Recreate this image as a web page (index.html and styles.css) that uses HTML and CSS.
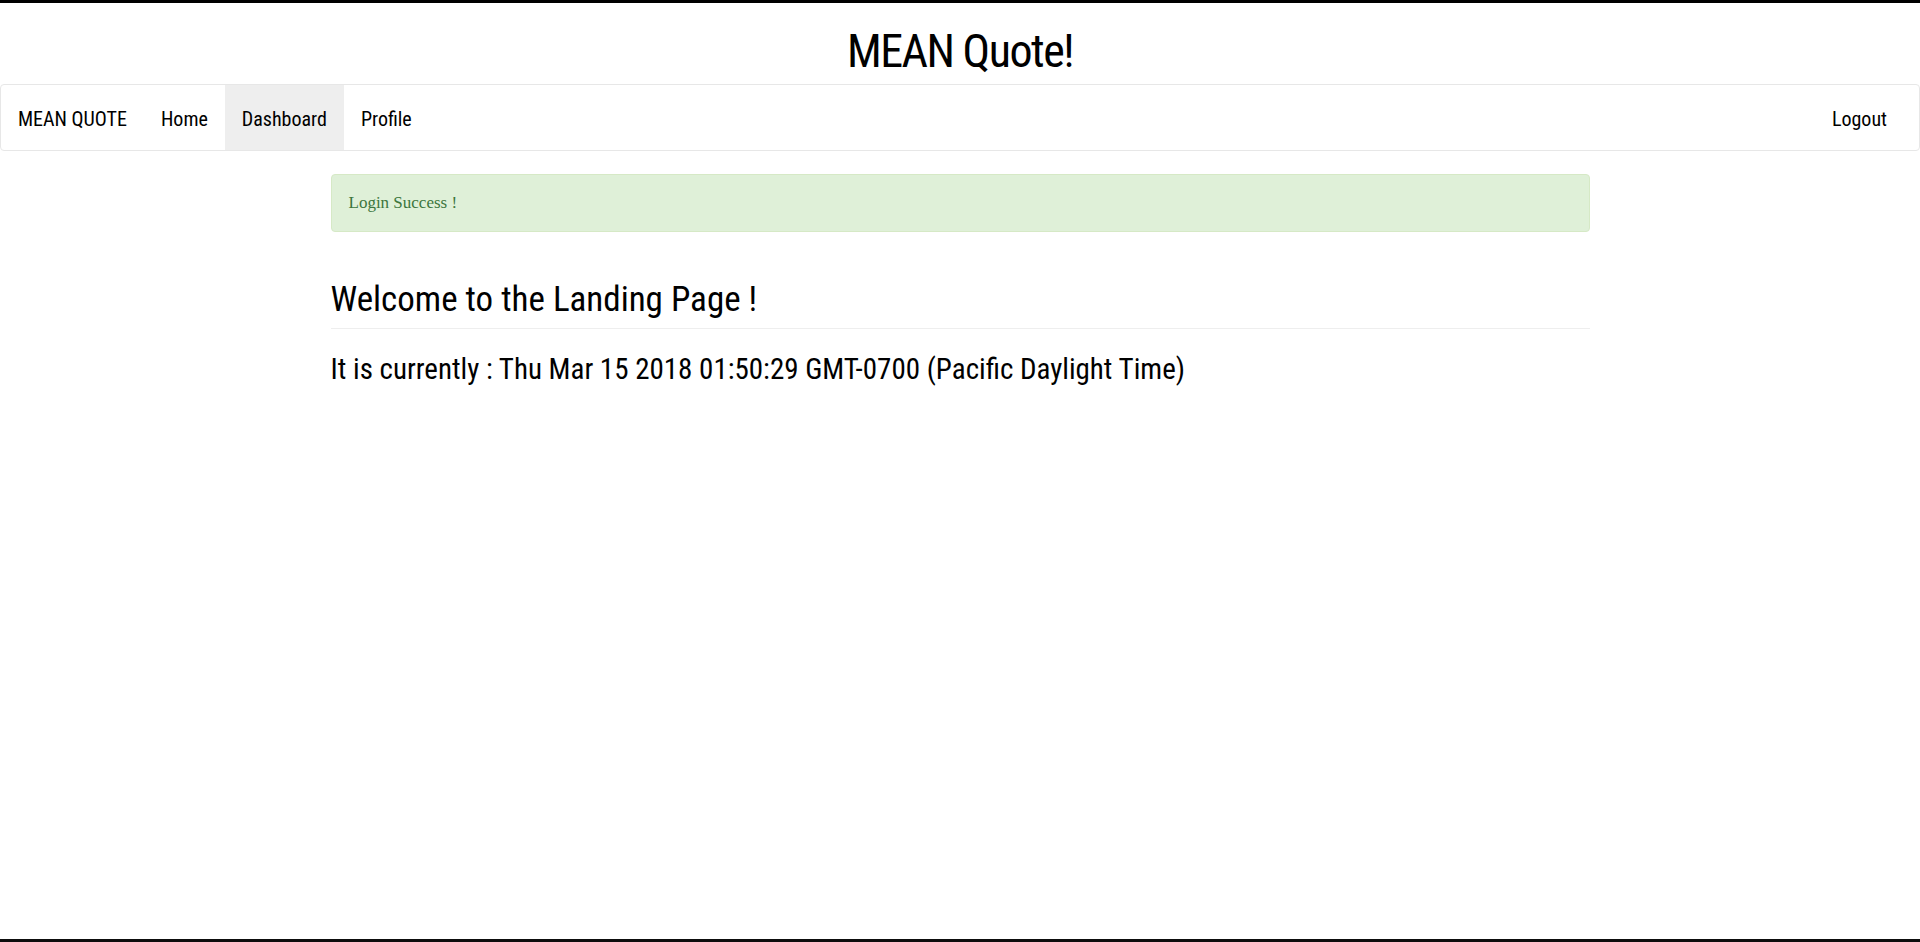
FILE: index.html
```html
<!DOCTYPE html>
<html lang="en">
<head>
<meta charset="utf-8">
<title>MEAN Quote!</title>
<link rel="stylesheet" href="styles.css">
</head>
<body>
<div class="page">
  <div class="topbar"></div>
  <h1 class="site-title">MEAN Quote!</h1>
  <nav class="navbar">
    <div class="nav-left">
      <a class="brand" href="#">MEAN QUOTE</a>
      <a class="nav-link" href="#">Home</a>
      <a class="nav-link active" href="#">Dashboard</a>
      <a class="nav-link" href="#">Profile</a>
    </div>
    <div class="nav-right">
      <a class="nav-link" href="#">Logout</a>
    </div>
  </nav>
  <main class="container">
    <div class="alert">Login Success !</div>
    <h2 class="page-header">Welcome to the Landing Page !</h2>
    <h3 class="time">It is currently : Thu Mar 15 2018 01:50:29 GMT-0700 (Pacific Daylight Time)</h3>
  </main>
  <div class="spacer"></div>
  <div class="bottombar"></div>
</div>
</body>
</html>
```
FILE: styles.css
```css
html, body {
  margin: 0;
  padding: 0;
  height: 100%;
  background: #fff;
}
body {
  font-family: "Roboto Condensed", "DejaVu Sans Condensed", sans-serif;
  color: #000;
}
.page {
  display: flex;
  flex-direction: column;
  min-height: 100%;
}
.topbar {
  height: 3px;
  background: #000;
}
.site-title {
  margin: 20px 0 5px;
  text-align: center;
  font-size: 46px;
  line-height: 56px;
  letter-spacing: -1.5px;
  font-weight: normal;
}
.navbar {
  display: flex;
  justify-content: space-between;
  border: 1px solid #e7e7e7;
  border-radius: 4px;
  background: #fff;
  height: 65px;
}
.nav-left, .nav-right {
  display: flex;
}
.nav-right {
  padding-right: 15px;
}
.brand, .nav-link {
  display: block;
  padding: 23px 17px 19px;
  font-size: 20px;
  line-height: 23px;
  color: #000;
  text-decoration: none;
}
.nav-link.active {
  background: #eee;
}
.container {
  width: 1259px;
  margin: 0 auto;
}
.alert {
  margin-top: 23px;
  padding: 16px 17px;
  border: 1px solid #d6e9c6;
  border-radius: 4px;
  background: #dff0d8;
  color: #3c763d;
  font-family: "Liberation Serif", serif;
  font-size: 17px;
  line-height: 24px;
}
.page-header {
  margin: 47px 0 0;
  padding-bottom: 7px;
  border-bottom: 1px solid #eee;
  font-size: 35px;
  line-height: 42px;
  font-weight: normal;
}
.time {
  margin: 23px 0 0;
  font-size: 29px;
  line-height: 34px;
  font-weight: normal;
}
.spacer {
  flex: 1;
}
.bottombar {
  height: 3px;
  background: #0d0d0d;
}
```
